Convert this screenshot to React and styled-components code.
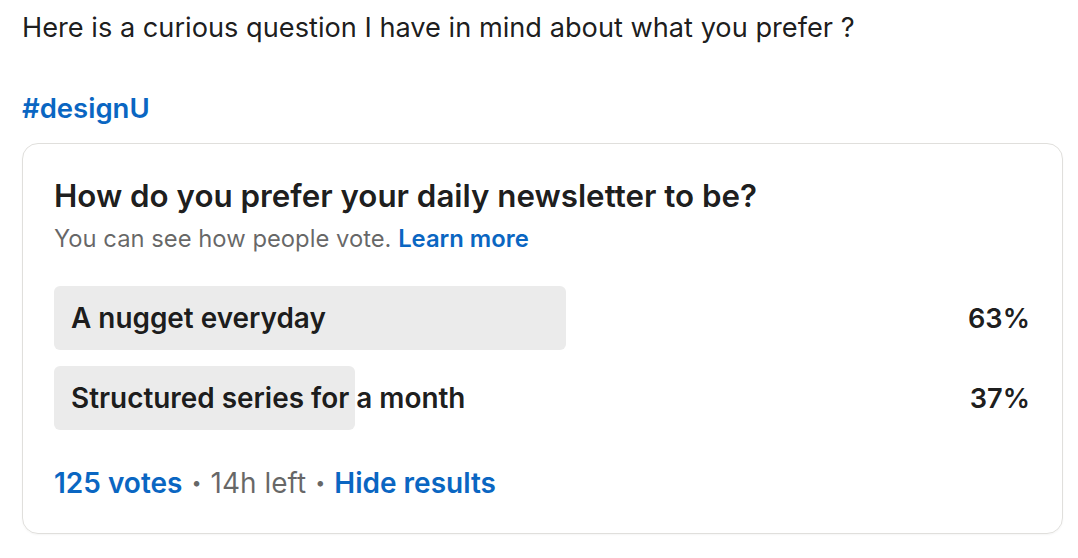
import React from "react";
import styled, { createGlobalStyle } from "styled-components";

const GlobalStyle = createGlobalStyle`
  body {
    margin: 0;
    background: #ffffff;
    font-family: Inter, "Noto Sans", "Liberation Sans", sans-serif;
    color: rgba(0, 0, 0, 0.9);
  }
`;

const options = [
  { label: "A nugget everyday", percent: 63 },
  { label: "Structured series for a month", percent: 37 },
];

const App = () => {
  return (
    <Page>
      <GlobalStyle />
      <Intro>Here is a curious question I have in mind about what you prefer ?</Intro>
      <Hashtag>#designU</Hashtag>
      <PollCard>
        <Question>How do you prefer your daily newsletter to be?</Question>
        <Note>
          You can see how people vote. <Link>Learn more</Link>
        </Note>
        <OptionList>
          {options.map((o) => (
            <OptionRow key={o.label}>
              <Track>
                <Fill style={{ width: `${o.percent}%` }} />
                <OptionLabel>{o.label}</OptionLabel>
              </Track>
              <Percent>{o.percent}%</Percent>
            </OptionRow>
          ))}
        </OptionList>
        <Footer>
          <Link>125 votes</Link>
          <Dot>•</Dot>
          <span>14h left</span>
          <Dot>•</Dot>
          <Link>Hide results</Link>
        </Footer>
      </PollCard>
    </Page>
  );
};

const Page = styled.div`
  width: 1078px;
  height: 558px;
  padding: 11px 16px 0 22px;
  box-sizing: border-box;
`;

const Intro = styled.p`
  margin: 0;
  font-size: 27.2px;
  line-height: 34px;
`;

const Hashtag = styled.a`
  display: block;
  margin-top: 46px;
  font-size: 27.5px;
  line-height: 34px;
  font-weight: 600;
  color: #0a66c2;
`;

const PollCard = styled.div`
  margin-top: 18px;
  width: 1041px;
  box-sizing: border-box;
  border: 1.5px solid #e0dfdc;
  border-radius: 16px;
  padding: 33px 32px 33px 31px;
  box-shadow: 0 1px 2px rgba(0, 0, 0, 0.04);
`;

const Question = styled.h2`
  margin: 0;
  font-size: 31.3px;
  line-height: 38px;
  font-weight: 600;
`;

const Note = styled.p`
  margin: 9px 0 0;
  font-size: 23.8px;
  line-height: 30px;
  color: rgba(0, 0, 0, 0.6);
`;

const Link = styled.a`
  color: #0a66c2;
  font-weight: 600;
`;

const OptionList = styled.div`
  margin-top: 32px;
  display: flex;
  flex-direction: column;
  gap: 16px;
`;

const OptionRow = styled.div`
  display: flex;
  align-items: center;
  justify-content: space-between;
`;

const Track = styled.div`
  position: relative;
  width: 813px;
  height: 64px;
  display: flex;
  align-items: center;
`;

const Fill = styled.div`
  position: absolute;
  left: 0;
  top: 0;
  bottom: 0;
  background: #ebebeb;
  border-radius: 6px;
`;

const OptionLabel = styled.span`
  position: relative;
  padding-left: 17px;
  font-size: 27.9px;
  font-weight: 600;
  white-space: nowrap;
`;

const Percent = styled.span`
  font-size: 27.2px;
  font-weight: 600;
`;

const Footer = styled.div`
  margin-top: 36px;
  display: flex;
  align-items: center;
  gap: 9px;
  font-size: 28px;
  line-height: 34px;
  color: rgba(0, 0, 0, 0.6);
`;

const Dot = styled.span`
  font-size: 18px;
`;

export default App;
